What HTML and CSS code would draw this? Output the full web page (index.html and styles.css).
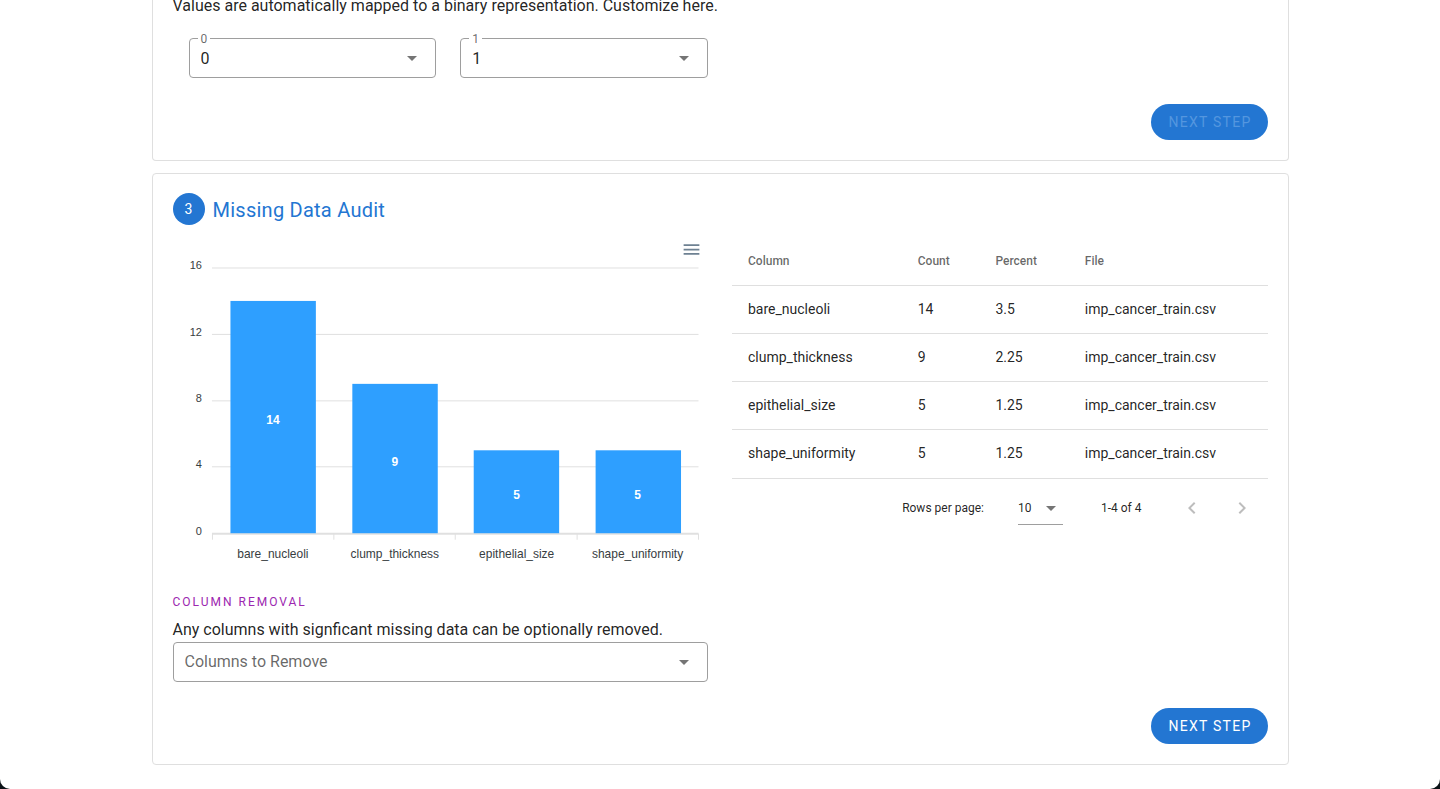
FILE: index.html
```html
<!DOCTYPE html>
<html lang="en">
<head>
<meta charset="utf-8">
<meta name="viewport" content="width=device-width, initial-scale=1">
<title>Missing Data Audit</title>
<link rel="stylesheet" href="styles.css">
</head>
<body>
<main class="page">
  <section class="card card-mapping">
    <p class="text text-lead">Values are automatically mapped to a binary representation. Customize here.</p>
    <div class="columns">
      <div class="mapping">
        <div class="field">
          <label class="field-label" for="map-0">0</label>
          <select class="field-select" id="map-0"><option>0</option><option>1</option></select>
          <svg class="caret" viewBox="0 0 24 24" aria-hidden="true"><path d="M7 10l5 5 5-5z"/></svg>
        </div>
        <div class="field">
          <label class="field-label" for="map-1">1</label>
          <select class="field-select" id="map-1"><option>1</option><option>0</option></select>
          <svg class="caret" viewBox="0 0 24 24" aria-hidden="true"><path d="M7 10l5 5 5-5z"/></svg>
        </div>
      </div>
    </div>
    <div class="actions"><button class="btn" type="button" disabled>NEXT STEP</button></div>
  </section>

  <section class="card">
    <header class="step">
      <span class="step-number">3</span>
      <h2 class="step-title">Missing Data Audit</h2>
    </header>
    <div class="columns">
      <div>
        <div class="chart">
          <svg class="chart-svg" viewBox="0 0 536 348" role="img" aria-label="Missing values per column">
            <g class="grid">
              <path d="M39 30H526M39 96.5H526M39 163H526M39 229H526"/>
              <path class="axis" d="M39 296H526"/>
              <path d="M39.5 296v6M161 296v6M282.5 296v6M404.5 296v6M526 296v6"/>
            </g>
            <g class="bars">
              <rect x="57.5" y="63" width="85.5" height="232.5"/>
              <rect x="179.5" y="146" width="85.5" height="149.5"/>
              <rect x="301" y="212.5" width="85.5" height="83"/>
              <rect x="423" y="212.5" width="85.5" height="83"/>
            </g>
            <g class="bar-values">
              <text x="100" y="186">14</text>
              <text x="222" y="228">9</text>
              <text x="344" y="261">5</text>
              <text x="465" y="261">5</text>
            </g>
            <g class="y-labels">
              <text x="29" y="31">16</text>
              <text x="29" y="98">12</text>
              <text x="29" y="164">8</text>
              <text x="29" y="230">4</text>
              <text x="29" y="297">0</text>
            </g>
            <g class="x-labels">
              <text x="100" y="320">bare_nucleoli</text>
              <text x="222" y="320">clump_thickness</text>
              <text x="344" y="320">epithelial_size</text>
              <text x="465" y="320">shape_uniformity</text>
            </g>
          </svg>
          <button class="chart-menu" type="button" aria-label="Chart menu">
            <svg viewBox="0 0 24 24" aria-hidden="true"><path d="M3 18h18v-2H3v2zm0-5h18v-2H3v2zm0-7v2h18V6H3z"/></svg>
          </button>
        </div>
        <h3 class="overline">COLUMN REMOVAL</h3>
        <p class="text">Any columns with signficant missing data can be optionally removed.</p>
        <div class="field">
          <select class="field-select placeholder" aria-label="Columns to Remove"><option>Columns to Remove</option></select>
          <svg class="caret" viewBox="0 0 24 24" aria-hidden="true"><path d="M7 10l5 5 5-5z"/></svg>
        </div>
      </div>
      <div>
        <table class="table">
          <colgroup><col class="col-name"><col class="col-count"><col class="col-percent"><col></colgroup>
          <thead><tr><th>Column</th><th>Count</th><th>Percent</th><th>File</th></tr></thead>
          <tbody>
            <tr><td>bare_nucleoli</td><td>14</td><td>3.5</td><td>imp_cancer_train.csv</td></tr>
            <tr><td>clump_thickness</td><td>9</td><td>2.25</td><td>imp_cancer_train.csv</td></tr>
            <tr><td>epithelial_size</td><td>5</td><td>1.25</td><td>imp_cancer_train.csv</td></tr>
            <tr><td>shape_uniformity</td><td>5</td><td>1.25</td><td>imp_cancer_train.csv</td></tr>
          </tbody>
        </table>
        <div class="pager">
          <label for="rows">Rows per page:</label>
          <div class="pager-field">
            <select class="pager-select" id="rows"><option>10</option><option>25</option></select>
            <svg class="caret" viewBox="0 0 24 24" aria-hidden="true"><path d="M7 10l5 5 5-5z"/></svg>
          </div>
          <span>1-4 of 4</span>
          <div class="pager-nav">
            <button class="icon-btn" type="button" aria-label="Previous page" disabled><svg viewBox="0 0 24 24" aria-hidden="true"><path d="M15.41 16.58L10.83 12l4.58-4.59L14 6l-6 6 6 6z"/></svg></button>
            <button class="icon-btn" type="button" aria-label="Next page" disabled><svg viewBox="0 0 24 24" aria-hidden="true"><path d="M8.59 16.58L13.17 12 8.59 7.41 10 6l6 6-6 6z"/></svg></button>
          </div>
        </div>
      </div>
    </div>
    <div class="actions"><button class="btn" type="button">NEXT STEP</button></div>
  </section>
</main>
</body>
</html>
```
FILE: styles.css
```css
* {
  box-sizing: border-box;
}

html {
  background: #0b1216;
}

body {
  margin: 0;
  font: 16px/24px Roboto, "Liberation Sans", sans-serif;
  color: rgba(0, 0, 0, 0.87);
}

.page {
  min-height: 100vh;
  padding: 0 max(24px, calc((100% - 1137px) / 2)) 24px;
  background: #fff;
  border-radius: 0 0 10px 10px;
}

.card {
  padding: 19px 20px 20px;
  border: 1px solid #dfdfdf;
  border-radius: 4px;
}

/* Open at the top: this card continues from the step above. */
.card-mapping {
  margin-bottom: 12px;
  padding-top: 0;
  border-top: 0;
  border-radius: 0 0 4px 4px;
}

.text,
.step-title,
.overline {
  margin: 0;
  font-weight: 400;
}

.text-lead {
  line-height: 12px;
}

.columns {
  display: grid;
  grid-template-columns: repeat(2, minmax(0, 1fr));
  gap: 24px;
}

.mapping {
  display: grid;
  grid-template-columns: 1fr 1fr;
  gap: 24px;
  padding: 26px 0 0 16px;
}

.field,
.pager-field {
  position: relative;
  display: grid;
  align-items: center;
}

.field-select,
.pager-select {
  grid-area: 1 / 1;
  width: 100%;
  margin: 0;
  border: 1px solid #9e9e9e;
  border-radius: 4px;
  background: transparent;
  font: inherit;
  color: inherit;
  appearance: none;
}

.field-select {
  height: 40px;
  padding: 0 40px 0 11px;
}

.mapping .field-select {
  padding-top: 2px;
}

.field-select.placeholder {
  color: rgba(0, 0, 0, 0.6);
}

.field-label {
  position: absolute;
  top: -6px;
  left: 9px;
  padding: 0 3px;
  background: #fff;
  font-size: 12px;
  line-height: 14px;
  color: rgba(0, 0, 0, 0.6);
}

.caret {
  grid-area: 1 / 1;
  justify-self: end;
  width: 24px;
  height: 24px;
  margin-right: 12px;
  fill: #757575;
  pointer-events: none;
}

.actions {
  display: flex;
  justify-content: flex-end;
  padding-top: 26px;
}

.btn {
  height: 36px;
  padding: 0 16px 0 17px;
  border: 0;
  border-radius: 18px;
  background: #2376d2;
  font: 14px/20px Roboto, "Liberation Sans", sans-serif;
  letter-spacing: 0.09em;
  color: #fff;
}

.btn:disabled {
  color: #5496df;
}

.step {
  display: flex;
  align-items: center;
  gap: 8px;
  margin-bottom: 13px;
  color: #2376d2;
}

.step-number {
  display: grid;
  place-items: center;
  width: 32px;
  height: 32px;
  border-radius: 50%;
  background: #2376d2;
  font-size: 14px;
  color: #fff;
}

.step-title {
  padding-top: 2px;
  font-size: 20px;
  line-height: 30px;
  letter-spacing: 0.0125em;
}

.chart {
  position: relative;
}

.chart-svg {
  display: block;
  width: 100%;
  font-family: "Liberation Sans", Arial, sans-serif;
}

.grid {
  fill: none;
  stroke: #e0e0e0;
}

.axis {
  stroke-width: 2;
}

.bars {
  fill: #2e9fff;
}

.bar-values {
  font-size: 12px;
  font-weight: 700;
  fill: #fff;
  text-anchor: middle;
}

.y-labels {
  font-size: 11px;
  fill: #373d3f;
  text-anchor: end;
}

.x-labels {
  font-size: 12px;
  fill: #373d3f;
  text-anchor: middle;
}

.chart-menu {
  position: absolute;
  top: 1px;
  right: 6px;
  width: 21px;
  height: 21px;
  padding: 0;
  border: 0;
  background: none;
  fill: #6e8192;
}

.chart-menu svg {
  display: block;
}

.overline {
  font-size: 12px;
  line-height: 32px;
  letter-spacing: 0.1666667em;
  color: #9c27b0;
}

.table {
  width: 100%;
  border-spacing: 0;
  table-layout: fixed;
  font-size: 14px;
  line-height: 20px;
}

.col-name {
  width: 31.7%;
}

.col-count {
  width: 14.5%;
}

.col-percent {
  width: 16.7%;
}

.table th,
.table td {
  height: 48px;
  padding: 0 16px 2px;
  border-bottom: 1px solid #dfdfdf;
  text-align: left;
}

.table tbody tr:last-child td {
  height: 49px;
}

.table th {
  font-size: 12px;
  font-weight: 500;
  color: rgba(0, 0, 0, 0.6);
}

.pager {
  display: flex;
  align-items: center;
  justify-content: flex-end;
  height: 58px;
  padding-right: 8px;
  font-size: 12px;
}

.pager-field {
  width: 45px;
  margin: 0 38px 0 34px;
}

.pager-select {
  height: 34px;
  padding: 0;
  border-width: 0 0 1px;
  border-radius: 0;
}

.pager-field .caret {
  margin-right: 0;
}

.pager-nav {
  display: flex;
  gap: 14px;
  margin-left: 32px;
}

.icon-btn {
  display: grid;
  place-items: center;
  width: 36px;
  height: 36px;
  padding: 0;
  border: 0;
  background: none;
  fill: #bdbdbd;
}

.icon-btn svg {
  width: 24px;
  height: 24px;
}
```
